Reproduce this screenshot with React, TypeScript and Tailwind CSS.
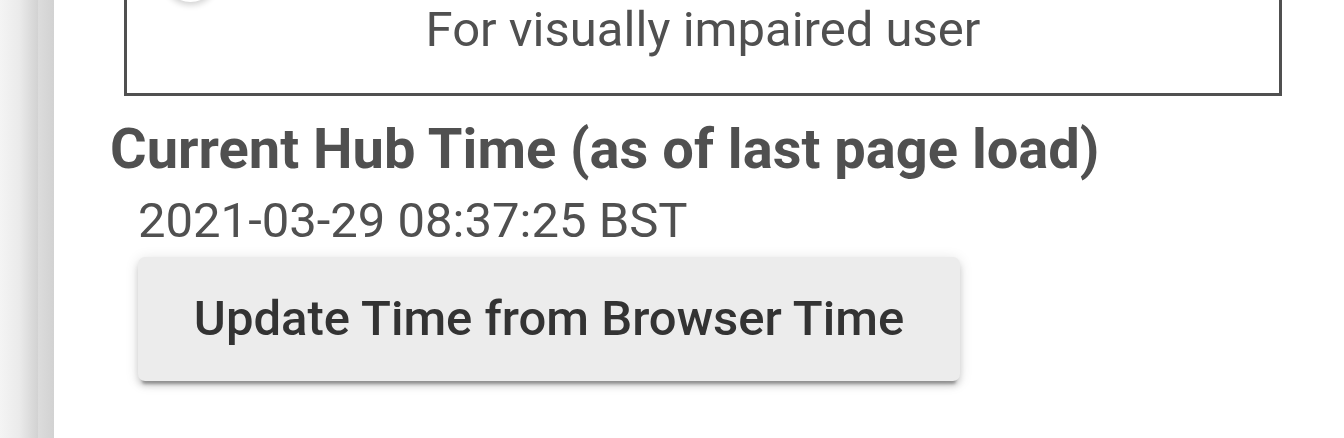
export default function App() {
  return (
    <div className="flex h-[438px] w-[1344px] overflow-hidden bg-white font-['Roboto',sans-serif]">
      <div className="w-[38px] shrink-0 bg-gradient-to-r from-[#f4f4f4] via-[#ebebeb] to-[#d2d2d2]" />
      <div className="w-[16px] shrink-0 bg-gradient-to-r from-[#dcdcdc] to-[#d2d2d2]" />

      <main className="flex flex-1 flex-col">
        <section className="relative ml-[70px] mt-[-40px] w-[1158px] border-[3px] border-[#505050] pt-[38px] pb-[34px]">
          <div className="absolute left-[36px] top-[-16px] h-[55px] w-[55px] rounded-full bg-white shadow-[0_3px_6px_rgba(0,0,0,0.18)]" />
          <p className="text-center text-[49px] leading-[58px] text-[#505050]">For visually impaired user</p>
        </section>

        <h2 className="ml-[56px] mt-[20px] text-[56px] font-bold leading-[66px] text-[#505050]">
          Current Hub Time (as of last page load)
        </h2>
        <p className="ml-[84px] mt-[10px] text-[49px] leading-[58px] text-[#505050]">2021-03-29 08:37:25 BST</p>

        <button className="ml-[84px] mt-[7px] h-[124px] w-[822px] rounded-[7px] bg-[#ececec] text-[49px] font-medium text-[#333333] shadow-[0_7px_3px_-4px_rgba(0,0,0,0.3),0_5px_6px_0_rgba(0,0,0,0.14),0_2px_14px_0_rgba(0,0,0,0.12)]">
          Update Time from Browser Time
        </button>
      </main>
    </div>
  );
}
